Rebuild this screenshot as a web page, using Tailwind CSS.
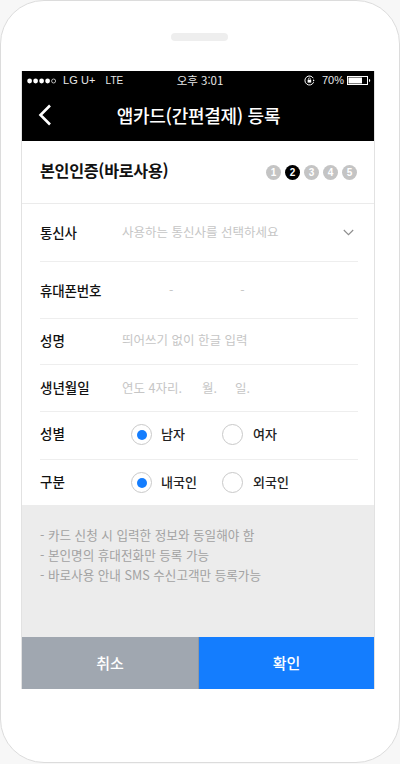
<!DOCTYPE html>
<html lang="ko">
<head>
  <meta charset="utf-8">
  <title>앱카드 등록</title>
  <script src="https://cdn.jsdelivr.net/npm/@tailwindcss/browser@4"></script>
</head>
<body class="bg-[#f7f7f7] font-['Noto_Sans_CJK_KR','Noto_Sans',sans-serif]">
  <div class="w-[400px] h-[764px] overflow-hidden">
    <!-- phone frame -->
    <div class="w-[400px] h-[763px] bg-white border border-[#dcdcdc] rounded-[44px] flex flex-col items-center">
      <div class="mt-[32px] mr-[2px] w-[57px] h-[8px] rounded-full bg-[#eeeeee]"></div>

      <div class="mt-[30px] self-start ml-[20px] w-[354px] h-[618px] border border-[#e2e2e2] border-t-0 flex flex-col">
        <!-- status + title -->
        <div class="bg-black text-white h-[70px] shrink-0">
          <div class="h-[18px] pl-[5px] pr-[3px] pt-[1px] flex items-center justify-between text-[11px] font-['Liberation_Sans','Noto_Sans_CJK_KR',sans-serif] text-[#e8e8e8]">
            <div class="flex items-center w-[130px]">
              <svg width="32" height="6" viewBox="0 0 32 6" class="mr-[4px]">
                <circle cx="2.600" cy="3" r="2.400" fill="#fff"/><circle cx="8.600" cy="3" r="2.400" fill="#fff"/><circle cx="14.600" cy="3" r="2.400" fill="#fff"/><circle cx="20.600" cy="3" r="2.400" fill="#fff"/><circle cx="26.600" cy="3" r="2" fill="none" stroke="#fff" stroke-width=".7"/>
              </svg>
              <span class="text-[11px] tracking-[0.1px]">LG U+</span>
              <span class="ml-[10px] text-[10px]">LTE</span>
            </div>
            <div class="text-[11.5px] font-['Noto_Sans_CJK_KR',sans-serif] w-[60px] text-center mr-[23px]">오후 3:01</div>
            <div class="flex items-center w-[105px] justify-end">
              <svg width="11" height="11" viewBox="0 0 11 11" class="mr-[7px]">
                <path d="M9.300 3.200A4.500 4.500 0 1 0 9.600 7.200" fill="none" stroke="#fff" stroke-width="1"/>
                <rect x="3.600" y="4.800" width="3.600" height="2.800" fill="#fff"/>
                <path d="M4.400 4.800V3.900a1 1 0 0 1 2 0v.9" fill="none" stroke="#fff" stroke-width=".7"/>
                <path d="M9 4.200l1.600 1.200L9 6.600z" fill="#fff"/>
              </svg>
              <span class="text-[11px] mr-[3px]">70%</span>
              <svg width="24" height="9" viewBox="0 0 24 9">
                <rect x=".5" y=".5" width="20" height="8" fill="none" stroke="#fff"/>
                <rect x="1.500" y="1.500" width="13.500" height="6" fill="#fff"/>
                <path d="M22 3c.9.2 1.200.8 1.200 1.500S22.900 5.800 22 6z" fill="#fff"/>
              </svg>
            </div>
          </div>
          <div class="relative h-[52px] flex items-center justify-center">
            <svg width="14" height="22" viewBox="0 0 14 22" class="absolute left-[16px] top-[15px]">
              <path d="M12 1.500 2.500 11 12 20.500" fill="none" stroke="#fff" stroke-width="2.600"/>
            </svg>
            <span class="text-[18px] font-medium tracking-[-0.3px] ml-[1px] mt-[1px]">앱카드(간편결제) 등록</span>
          </div>
        </div>

        <!-- section title -->
        <div class="h-[63px] shrink-0 border-b border-[#ebebeb] pl-[18px] pr-[17px] flex items-center justify-between">
          <span class="text-[16.2px] font-bold text-[#111] tracking-[-0.3px] mt-[-3px]">본인인증(바로사용)</span>
          <div class="flex gap-[4px] mt-[1px] font-['Liberation_Sans',sans-serif] text-[10px] font-bold text-white">
            <span class="w-[15px] h-[15px] rounded-full bg-[#c4c4c4] flex items-center justify-center">1</span>
            <span class="w-[15px] h-[15px] rounded-full bg-black flex items-center justify-center">2</span>
            <span class="w-[15px] h-[15px] rounded-full bg-[#c4c4c4] flex items-center justify-center">3</span>
            <span class="w-[15px] h-[15px] rounded-full bg-[#c4c4c4] flex items-center justify-center">4</span>
            <span class="w-[15px] h-[15px] rounded-full bg-[#c4c4c4] flex items-center justify-center">5</span>
          </div>
        </div>

        <!-- form -->
        <div class="h-[301px] shrink-0 pl-[18px] pr-[16px] text-[12.5px] flex flex-col">
          <div class="h-[58px] border-b border-[#eeeeee] flex items-center">
            <span class="w-[82px] text-[13.5px] font-medium text-[#111] tracking-[-0.2px] mt-[-1px]">통신사</span>
            <span class="text-[#c6c6c6] mt-[-1px] flex-1">사용하는 통신사를 선택하세요</span>
            <svg width="11" height="7" viewBox="0 0 11 7" class="mr-[4px]"><path d="M.8 1l4.700 4.700L10.200 1" fill="none" stroke="#8d8d8d" stroke-width="1.100"/></svg>
          </div>
          <div class="h-[57px] border-b border-[#eeeeee] flex items-center">
            <span class="w-[82px] text-[13.5px] font-medium text-[#111] tracking-[-0.2px]">휴대폰번호</span>
            <span class="text-[#c6c6c6] ml-[47px]">-</span>
            <span class="text-[#c6c6c6] ml-[67px]">-</span>
          </div>
          <div class="h-[46px] border-b border-[#eeeeee] flex items-center">
            <span class="w-[82px] text-[13.5px] font-medium text-[#111] mt-[-2px]">성명</span>
            <span class="text-[#c6c6c6] mt-[-2px]">띄어쓰기 없이 한글 입력</span>
          </div>
          <div class="h-[47px] border-b border-[#eeeeee] flex items-center">
            <span class="w-[82px] text-[13.5px] font-medium text-[#111] mt-[-2px]">생년월일</span>
            <span class="text-[#c6c6c6] w-[80px]">연도 4자리.</span>
            <span class="text-[#c6c6c6] w-[33px]">월.</span>
            <span class="text-[#c6c6c6]">일.</span>
          </div>
          <div class="h-[48px] border-b border-[#eeeeee] flex items-center">
            <span class="w-[91px] text-[13.5px] font-medium text-[#111] mt-[-4px]">성별</span>
            <span class="w-[21px] h-[21px] mt-[-2px] rounded-full border border-[#c9c9c9] flex items-center justify-center"><span class="w-[10px] h-[10px] rounded-full bg-[#147dfe]"></span></span>
            <span class="ml-[9px] w-[61px] mt-[-3px] text-[13px] font-medium text-[#222]">남자</span>
            <span class="w-[21px] h-[21px] mt-[-2px] rounded-full border border-[#c9c9c9]"></span>
            <span class="ml-[10px] mt-[-3px] text-[13px] font-medium text-[#222]">여자</span>
          </div>
          <div class="h-[45px] flex items-center">
            <span class="w-[91px] text-[13.5px] font-medium text-[#111] mt-[-3px]">구분</span>
            <span class="w-[21px] h-[21px] rounded-full border border-[#c9c9c9] flex items-center justify-center"><span class="w-[10px] h-[10px] rounded-full bg-[#147dfe]"></span></span>
            <span class="ml-[9px] w-[61px] mt-[-1px] text-[13px] font-medium text-[#222]">내국인</span>
            <span class="w-[21px] h-[21px] rounded-full border border-[#c9c9c9]"></span>
            <span class="ml-[10px] mt-[-1px] text-[13px] font-medium text-[#222]">외국인</span>
          </div>
        </div>

        <!-- notes -->
        <div class="h-[132px] shrink-0 bg-[#ececec] pt-[20px] px-[18px] text-[12.6px] leading-[20px] text-[#a2a2a2]">
          <p>- 카드 신청 시 입력한 정보와 동일해야 함</p>
          <p>- 본인명의 휴대전화만 등록 가능</p>
          <p>- 바로사용 안내 SMS 수신고객만 등록가능</p>
        </div>

        <!-- buttons -->
        <div class="h-[52px] shrink-0 flex text-white text-[15px] font-medium">
          <button class="w-[177px] bg-[#a0a7b0] border-r border-[#8f97a1] flex items-center justify-center">취소</button>
          <button class="flex-1 bg-[#147dfe] flex items-center justify-center">확인</button>
        </div>
      </div>
    </div>
  </div>
</body>
</html>
